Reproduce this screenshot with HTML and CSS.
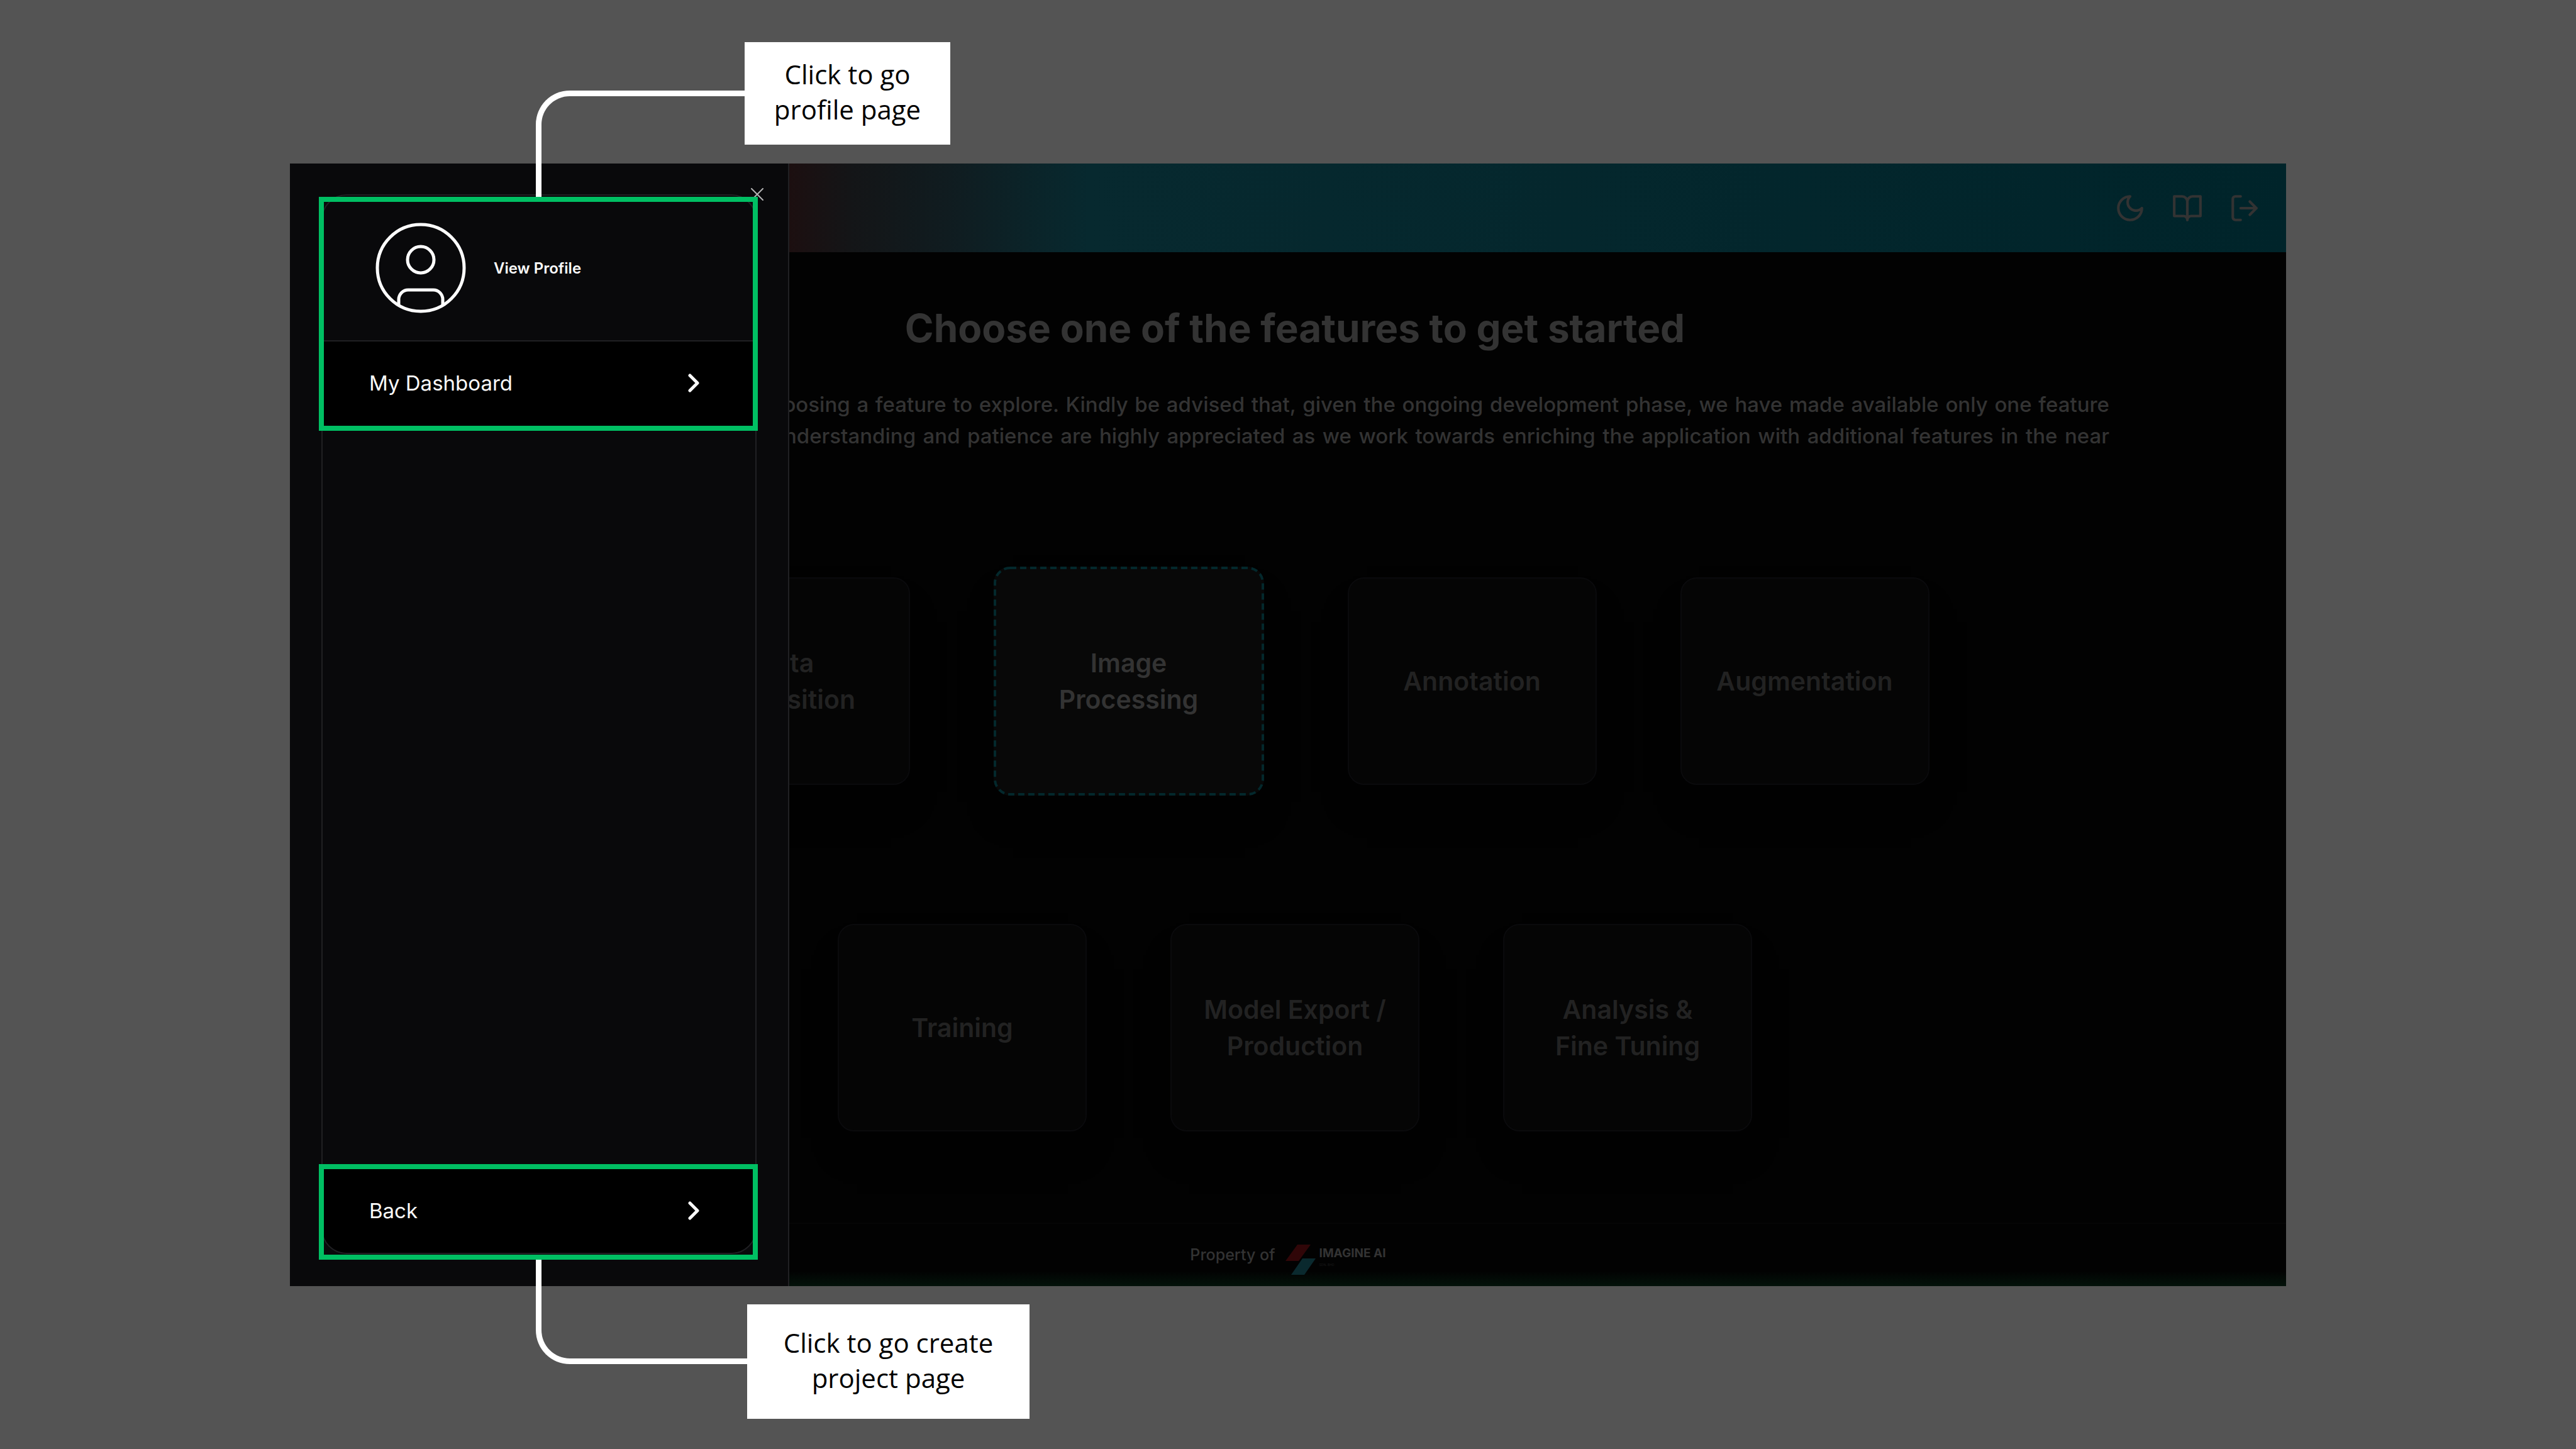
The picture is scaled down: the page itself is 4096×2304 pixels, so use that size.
FILE: index.html
```html
<!DOCTYPE html>
<html lang="en">
<head>
<meta charset="utf-8">
<title>Imagine AI - Features</title>
<link rel="stylesheet" href="styles.css">
</head>
<body>
<div class="app">
  <header class="topbar">
    <button class="icon-btn" aria-label="Toggle theme"><svg viewBox="0 0 24 24"><path d="M12 3a6 6 0 0 0 9 9 9 9 0 1 1-9-9Z"/></svg></button>
    <button class="icon-btn" aria-label="Documentation"><svg viewBox="0 0 24 24"><path d="M2 3h6a4 4 0 0 1 4 4v14a3 3 0 0 0-3-3H2z"/><path d="M22 3h-6a4 4 0 0 0-4 4v14a3 3 0 0 1 3-3h7z"/></svg></button>
    <button class="icon-btn" aria-label="Log out"><svg viewBox="0 0 24 24"><path d="M9 21H5a2 2 0 0 1-2-2V5a2 2 0 0 1 2-2h4"/><path d="M16 17l5-5-5-5"/><path d="M21 12H9"/></svg></button>
  </header>
  <main class="main">
    <h1 class="title">Choose one of the features to get started</h1>
    <p class="intro">Begin your journey here by choosing a feature to explore. Kindly be advised that, given the ongoing development phase, we have made available only one feature for&nbsp;use now. Your continued understanding and patience are highly appreciated as we work towards enriching the application with additional features in the near future.</p>
    <div class="features">
      <div class="row">
        <button class="card">Data<br>Acquisition</button>
        <button class="card card-active"><svg class="outline"><rect x="2" y="2" width="426" height="360" rx="24"/></svg>Image<br>Processing</button>
        <button class="card">Annotation</button>
        <button class="card">Augmentation</button>
      </div>
      <div class="row">
        <button class="card">Training</button>
        <button class="card">Model Export /<br>Production</button>
        <button class="card">Analysis &amp;<br>Fine Tuning</button>
      </div>
    </div>
  </main>
  <footer class="footer">
    <span class="owner">Property of</span>
    <svg class="logo" viewBox="0 0 48 48"><path fill="#300608" d="M19 0h21L21 26H0z"/><path fill="#0a292e" d="M27 22h21L30 48H9z"/></svg>
    <span class="brand"><strong>IMAGINE AI</strong><small>SDN. BHD</small></span>
  </footer>

  <aside class="sheet">
    <button class="close" aria-label="Close"><svg viewBox="0 0 20 20"><path d="M1 1l18 18M19 1L1 19"/></svg></button>
    <nav class="panel">
      <a class="profile" href="#profile">
        <svg class="avatar" viewBox="0 0 144 144"><circle cx="72" cy="72" r="69"/><circle cx="72" cy="59" r="21"/><path d="M37 131v-9a15 15 0 0 1 15-15h40a15 15 0 0 1 15 15v9"/></svg>
        <span>View Profile</span>
      </a>
      <a class="item" href="#dashboard">My Dashboard<svg class="chevron" viewBox="0 0 18 30"><path d="M3 3l12 12L3 27"/></svg></a>
      <a class="item item-last" href="#back">Back<svg class="chevron" viewBox="0 0 18 30"><path d="M3 3l12 12L3 27"/></svg></a>
    </nav>
  </aside>
</div>

<div class="mark mark-top"></div>
<div class="mark mark-bottom"></div>
<div class="wire wire-top"></div>
<div class="wire wire-bottom"></div>
<div class="note note-top">Click to go<br>profile page</div>
<div class="note note-bottom">Click to go create<br>project page</div>
</body>
</html>
```
FILE: styles.css
```css
* { box-sizing: border-box; }

body {
  margin: 0;
  min-height: 100vh;
  padding: 260px 461px 259px;
  display: flex;
  position: relative;
  background: #545454;
  font-family: Inter, "Liberation Sans", sans-serif;
}

button {
  border: 0;
  padding: 0;
  background: none;
  font: inherit;
  color: inherit;
}

a { color: inherit; text-decoration: none; }

svg {
  display: block;
  fill: none;
  stroke: currentColor;
  stroke-linecap: round;
  stroke-linejoin: round;
}

.app {
  flex: 1;
  display: flex;
  flex-direction: column;
  position: relative;
  background: #020202;
  color: #333;
}

/* Top bar */
.topbar {
  display: flex;
  justify-content: flex-end;
  align-items: center;
  gap: 41px;
  height: 141px;
  padding: 0 41px;
  background: linear-gradient(90deg, #330000 10%, #1c0f10 25%, #141517 28%, #101c20 33%, #07292f 40%, #00242a 100%);
}

.icon-btn svg { width: 50px; height: 50px; stroke-width: 2; }

/* Main area */
.main {
  flex: 1;
  padding: 79px 281px 0 303px;
}

.title {
  margin: 0;
  font-size: 62px;
  line-height: 84px;
  font-weight: 700;
  text-align: center;
}

.intro {
  margin: 54px 0 0;
  font-size: 33px;
  line-height: 50px;
  font-weight: 500;
  text-align: justify;
}

.features {
  display: flex;
  flex-direction: column;
  gap: 204px;
  margin-top: 133px;
}

.row {
  display: flex;
  justify-content: center;
  align-items: center;
  gap: 133px;
}

.card {
  width: 396px;
  height: 330px;
  border: 2px solid #0a0a0c;
  border-radius: 26px;
  background: #050505;
  box-shadow: 0 41px 60px -30px rgba(0, 0, 0, 0.5);
  color: #222;
  font-size: 41px;
  line-height: 58px;
  font-weight: 600;
}

.card-active {
  position: relative;
  width: 430px;
  height: 364px;
  border: 0;
  background: #080808;
  color: #333;
}

.outline {
  position: absolute;
  inset: 0;
  width: 100%;
  height: 100%;
  stroke: #03282c;
  stroke-width: 4;
  stroke-linecap: butt;
  stroke-dasharray: 10 6;
}

/* Footer */
.footer {
  display: flex;
  justify-content: center;
  align-items: flex-start;
  height: 101px;
  padding-top: 33px;
  border-top: 2px solid #050505;
  background: linear-gradient(0deg, #03120a, #020202 24px);
}

.owner {
  margin-right: 16px;
  font-size: 25px;
  line-height: 32px;
  font-weight: 500;
}

.logo { width: 48px; height: 48px; margin-right: 6px; stroke: none; }

.brand { display: flex; flex-direction: column; font-size: 19px; line-height: 28px; }
.brand small { font-size: 5px; line-height: 8px; color: #1a1a1a; }

/* Side sheet */
.sheet {
  position: absolute;
  inset: 0 auto 0 0;
  width: 794px;
  padding: 49px 50px 51px;
  display: flex;
  border-right: 2px solid #202023;
  background: #09090b;
  color: #fafafa;
}

.close {
  position: absolute;
  top: 39px;
  right: 39px;
  color: #b4b4b5;
}
.close svg { width: 20px; height: 20px; stroke-width: 2; }

.panel {
  flex: 1;
  display: flex;
  flex-direction: column;
  overflow: hidden;
  border: 2px solid #202023;
  border-radius: 40px;
}

.profile {
  display: flex;
  align-items: center;
  gap: 44px;
  height: 232px;
  padding: 0 84px;
  border-bottom: 2px solid #202023;
  font-size: 24px;
  font-weight: 600;
}
.avatar { width: 144px; height: 144px; stroke: #fff; stroke-width: 5; }

.item {
  display: flex;
  justify-content: space-between;
  align-items: center;
  height: 136px;
  padding: 0 89px 4px 74px;
  background: #000;
  font-size: 33px;
}
.item-last { height: 134px; margin-top: auto; padding-bottom: 0; }
.chevron { width: 18px; height: 30px; stroke-width: 5; }

/* Annotation layer */
.mark {
  position: absolute;
  left: 507px;
  width: 698px;
  border: 8px solid #00bf63;
}
.mark-top { top: 313px; height: 372px; }
.mark-bottom { top: 1851px; height: 152px; }

.wire {
  position: absolute;
  left: 852px;
  border: 0 solid #fff;
  border-left-width: 9px;
}
.wire-top {
  top: 144px;
  width: 333px;
  height: 169px;
  border-top-width: 9px;
  border-top-left-radius: 54px;
}
.wire-bottom {
  top: 2003px;
  width: 337px;
  height: 166px;
  border-bottom-width: 9px;
  border-bottom-left-radius: 54px;
}

.note {
  position: absolute;
  display: grid;
  place-items: center;
  padding-bottom: 5px;
  background: #fff;
  color: #000;
  font-family: "Open Sans", "Noto Sans", sans-serif;
  font-size: 42px;
  line-height: 56px;
  text-align: center;
}
.note-top { left: 1184px; top: 67px; width: 327px; height: 163px; }
.note-bottom { left: 1188px; top: 2074px; width: 449px; height: 182px; }
```
